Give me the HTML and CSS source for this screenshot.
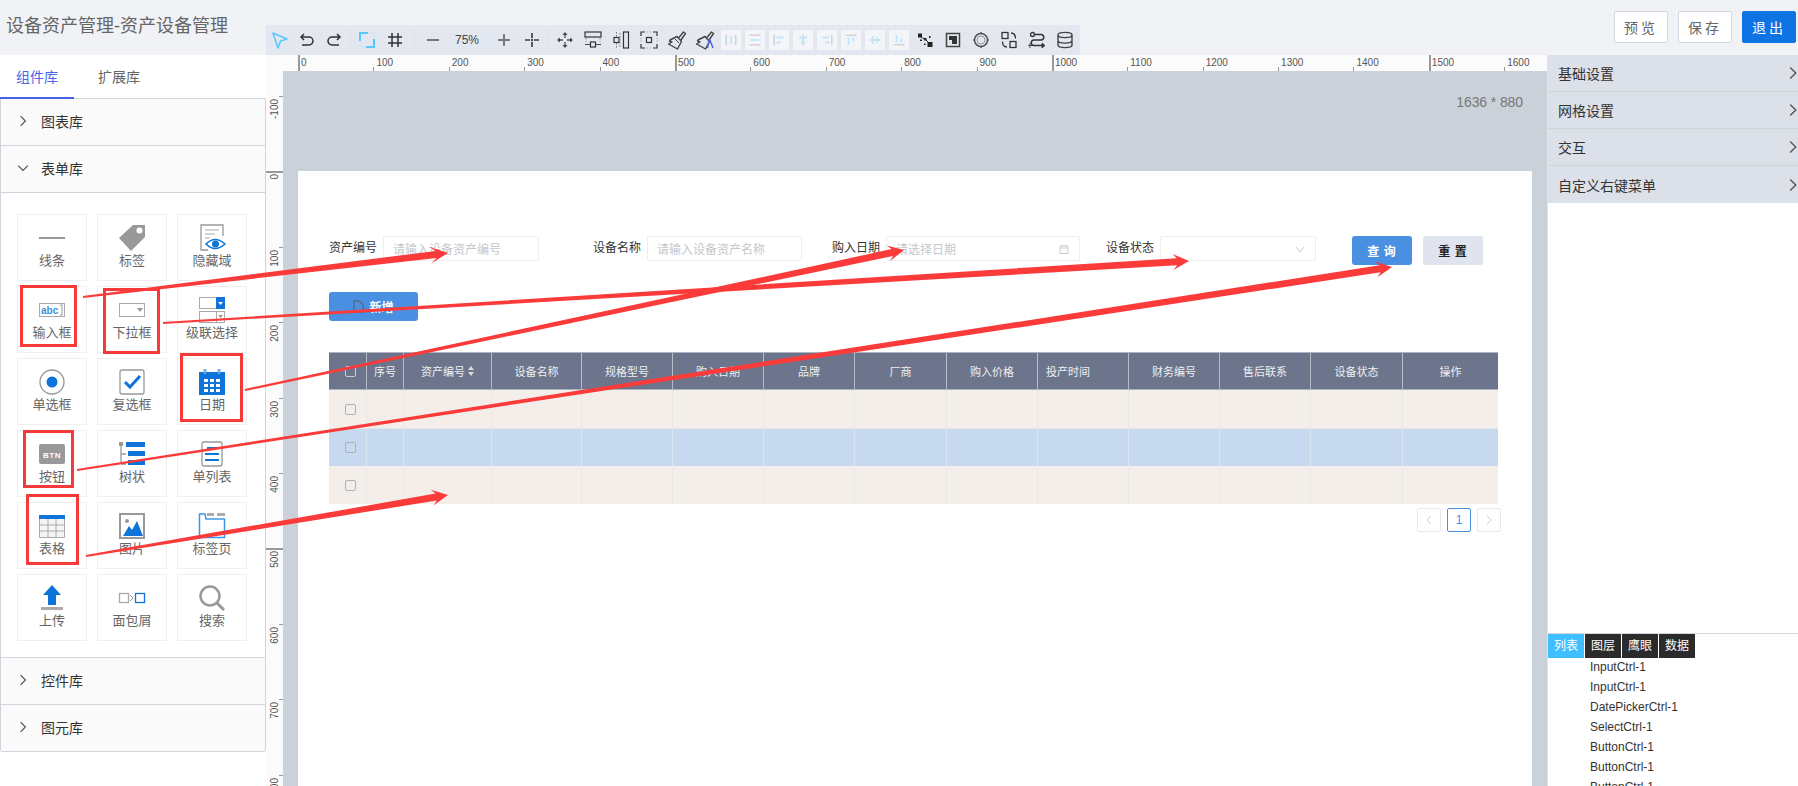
FILE: index.html
```html
<!DOCTYPE html>
<html lang="zh-CN">
<head>
<meta charset="utf-8">
<title>设备资产管理-资产设备管理</title>
<link rel="stylesheet" href="styles.css">
</head>
<body>
<div class="app">
  <header class="topbar">
    <h1 class="title">设备资产管理-资产设备管理</h1>
    <div class="toolbar">
      <span class="tool"><svg viewBox="0 0 20 20"><path d="M3 3 17 9 10.500 11 8 18Z" fill="none" stroke="#5ac8fa" stroke-width="1.600" stroke-linejoin="round"/></svg></span>
      <span class="tool tight"><svg viewBox="0 0 20 20"><path d="M7 4 4 7 7 10M4 7H12A3.500 3.500 0 0 1 12 15H5" fill="none" stroke="#333" stroke-width="1.500"/></svg></span>
      <span class="tool"><svg viewBox="0 0 20 20"><path d="M13 4 16 7 13 10M16 7H8A3.500 3.500 0 0 0 8 15H15" fill="none" stroke="#333" stroke-width="1.500"/></svg></span>
      <span class="sep gap5"></span>
      <span class="tool"><svg viewBox="0 0 20 20"><path d="M3 11V3H11M17 9V17H9" fill="none" stroke="#5ac8fa" stroke-width="2"/><path d="M3 11V17H9M11 3H17V9" fill="none" stroke="#cfe3f0" stroke-width="1"/></svg></span>
      <span class="tool"><svg viewBox="0 0 20 20"><path d="M7 3V17M13 3V17M3 7H17M3 13H17" fill="none" stroke="#333" stroke-width="1.500"/></svg></span>
      <span class="sep gap10"></span>
      <span class="tool"><svg viewBox="0 0 20 20"><path d="M4 10H16" stroke="#777" stroke-width="2"/></svg></span>
      <span class="zoom-value">75%</span>
      <span class="tool gap3"><svg viewBox="0 0 20 20"><path d="M4 10H16M10 4V16" stroke="#777" stroke-width="2"/></svg></span>
      <span class="tool"><svg viewBox="0 0 20 20"><path d="M10 3V8M10 12V17M3 10H8M12 10H17" stroke="#444" stroke-width="1.700"/><circle cx="10" cy="10" r="1.200" fill="#444"/></svg></span>
      <span class="sep gap5"></span>
      <span class="tool"><svg viewBox="0 0 20 20"><path d="M10 5V8M10 12V15M5 10H8M12 10H15" stroke="#555" stroke-width="1.300"/><path d="M10 2 12.500 5H7.500ZM10 18 7.500 15H12.500ZM2 10 5 7.500V12.500ZM18 10 15 12.500V7.500Z" fill="#444"/></svg></span>
      <span class="tool"><svg viewBox="0 0 20 20"><rect x="2" y="2" width="16" height="5" fill="none" stroke="#333" stroke-width="1.200"/><path d="M3 8V12M17 8V12" stroke="#888" stroke-dasharray="1.500 1.500"/><rect x="7.500" y="12" width="5" height="5" fill="none" stroke="#333" stroke-width="1.200"/><path d="M2 14.500H7M13 14.500H18" stroke="#444"/></svg></span>
      <span class="tool"><svg viewBox="0 0 20 20"><rect x="12.500" y="2" width="5" height="16" fill="none" stroke="#333" stroke-width="1.200"/><rect x="3" y="7.500" width="5" height="5" fill="none" stroke="#333" stroke-width="1.200"/><path d="M5.500 2V7M5.500 13V18M9 3V17" stroke="#777" stroke-dasharray="1.500 1.500"/></svg></span>
      <span class="tool"><svg viewBox="0 0 20 20"><path d="M2 6V2H6M14 2H18V6M18 14V18H14M6 18H2V14" fill="none" stroke="#333" stroke-width="1.200"/><path d="M8 2H12M8 18H12M2 8V12M18 8V12" stroke="#999" stroke-dasharray="1 1.500"/><rect x="7.500" y="7.500" width="5" height="5" fill="none" stroke="#333" stroke-width="1.200"/></svg></span>
      <span class="tool"><svg viewBox="0 0 20 20"><path d="M11.500 8 16.500 2 18.500 3.500 14 10M3 10 10 6.500 14.500 11.500 10.500 19 1.500 14 5 12 2.500 11Z" fill="none" stroke="#444" stroke-width="1.400" stroke-linejoin="round"/><path d="M8 9 12 13" stroke="#444"/></svg></span>
      <span class="tool"><svg viewBox="0 0 20 20"><path d="M11.500 8 16.500 2 18.500 3.500 14 10M3 10 10 6.500 14.500 11.500 10.500 19 1.500 14 5 12 2.500 11Z" fill="none" stroke="#444" stroke-width="1.400" stroke-linejoin="round"/><path d="M14.500 9 12.500 18M14.500 9 18 18" fill="none" stroke="#4a66d8" stroke-width="1.400"/></svg></span>
      <span class="tool off first-off"><svg viewBox="0 0 20 20"><path d="M4 3V17M16 3V17" stroke="#ccc" stroke-width="1.500"/><path d="M10 5V15" stroke="#bfe8fb" stroke-width="2.500"/></svg></span>
      <span class="tool off"><svg viewBox="0 0 20 20"><path d="M3 4H17M3 16H17" stroke="#ccc" stroke-width="1.500"/><path d="M5 10H15" stroke="#bfe8fb" stroke-width="2.500"/></svg></span>
      <span class="tool off"><svg viewBox="0 0 20 20"><path d="M4 3V17" stroke="#ccc" stroke-width="1.500"/><path d="M7 7H16M7 13H12" stroke="#bfe8fb" stroke-width="2.500"/></svg></span>
      <span class="tool off"><svg viewBox="0 0 20 20"><path d="M10 3V17" stroke="#ccc" stroke-width="1.500"/><path d="M5 7H15M7 13H13" stroke="#bfe8fb" stroke-width="2.500"/></svg></span>
      <span class="tool off"><svg viewBox="0 0 20 20"><path d="M16 3V17" stroke="#ccc" stroke-width="1.500"/><path d="M4 7H13M8 13H13" stroke="#bfe8fb" stroke-width="2.500"/></svg></span>
      <span class="tool off"><svg viewBox="0 0 20 20"><path d="M3 4H17" stroke="#ccc" stroke-width="1.500"/><path d="M7 7V16M13 7V12" stroke="#bfe8fb" stroke-width="2.500"/></svg></span>
      <span class="tool off"><svg viewBox="0 0 20 20"><path d="M3 10H17" stroke="#ccc" stroke-width="1.500"/><path d="M7 5V15M13 7V13" stroke="#bfe8fb" stroke-width="2.500"/></svg></span>
      <span class="tool off"><svg viewBox="0 0 20 20"><path d="M3 16H17" stroke="#ccc" stroke-width="1.500"/><path d="M7 4V13M13 8V13" stroke="#bfe8fb" stroke-width="2.500"/></svg></span>
      <span class="tool first-on"><svg viewBox="0 0 20 20"><path d="M3 3.500H7V7.500H3ZM12.500 12H17.500V17H12.500ZM9 8H11.500V10.500H9ZM5 9.500H7V11H5ZM14 6H15.500V8H14ZM9 13.500H10.500V15H9Z" fill="#222"/><path d="M5 6 9 9M11 10 14 13" stroke="#222"/></svg></span>
      <span class="tool"><svg viewBox="0 0 20 20"><rect x="3.500" y="3.500" width="13" height="13" fill="none" stroke="#444" stroke-width="1.500"/><path d="M6 6H14V14H9V10H6Z" fill="#333"/></svg></span>
      <span class="tool"><svg viewBox="0 0 20 20"><circle cx="10" cy="10" r="6.500" fill="none" stroke="#555" stroke-width="1.500"/><circle cx="10" cy="10" r="4" fill="none" stroke="#999"/><path d="M10 2V4M10 16V18M2 10H4M16 10H18" stroke="#444" stroke-width="1.200"/></svg></span>
      <span class="tool"><svg viewBox="0 0 20 20"><rect x="3" y="2.500" width="6" height="6" fill="none" stroke="#333" stroke-width="1.300"/><rect x="11" y="11.500" width="6" height="6" fill="none" stroke="#333" stroke-width="1.300"/><path d="M12 3C15 3 16.500 5 16.500 8.500M8 17C5 17 3.500 15 3.500 11.500" fill="none" stroke="#333" stroke-width="1.300"/></svg></span>
      <span class="tool"><svg viewBox="0 0 20 20"><circle cx="5.500" cy="4.500" r="2" fill="none" stroke="#333" stroke-width="1.300"/><path d="M8 4.500H14.500A2.800 2.800 0 0 1 14.500 10H6.500A2.800 2.800 0 0 0 6.500 15.500H15" fill="none" stroke="#333" stroke-width="1.500"/><path d="M15 13 18 15.500 15 18ZM3 13V18M1 15.500H6" fill="#333" stroke="#333" stroke-width=".8"/></svg></span>
      <span class="tool"><svg viewBox="0 0 20 20"><path d="M3 5C3 1.500 17 1.500 17 5V15C17 18.500 3 18.500 3 15ZM3 5C3 8.500 17 8.500 17 5M3 10.500C3 14 17 14 17 10.500" fill="none" stroke="#444" stroke-width="1.400"/></svg></span>
    </div>
    <div class="actions">
      <button class="act">预览</button>
      <button class="act">保存</button>
      <button class="act act-primary">退出</button>
    </div>
  </header>

  <div class="workspace">
    <aside class="lib">
      <nav class="lib-tabs">
        <span class="lib-tab lib-tab-on">组件库</span>
        <span class="lib-tab">扩展库</span>
      </nav>
      <div class="acc">
        <div class="acc-row"><svg class="chev" viewBox="0 0 10 10"><path d="M3 1 7 5 3 9"/></svg>图表库</div>
        <div class="acc-row"><svg class="chev" viewBox="0 0 10 10"><path d="M1 3 5 7 9 3"/></svg>表单库</div>
        <div class="acc-body">
          <div class="cards">
            <div class="card"><svg viewBox="0 0 30 30"><rect x="2" y="14" width="26" height="2" fill="#999"/></svg>线条</div>
            <div class="card"><svg viewBox="0 0 30 30"><path d="M2 15 16 2H28V14L14 28Z" fill="#999"/><circle cx="22.500" cy="7.500" r="3" fill="#fff"/></svg>标签</div>
            <div class="card"><svg viewBox="0 0 30 30"><path d="M11 27H4V2H26V13" fill="none" stroke="#999" stroke-width="1.300"/><path d="M8 7H22M8 11H18M8 15H13" stroke="#aaa" stroke-width="1.200"/><path d="M9 21Q18 12 28 21 18 30 9 21Z" fill="#fff" stroke="#0f74d9" stroke-width="1.500"/><circle cx="18.500" cy="21" r="3.500" fill="#0f74d9"/></svg>隐藏域</div>
            <div class="card"><svg viewBox="0 0 30 30"><rect x="2.500" y="8.500" width="25" height="13" fill="#fff" stroke="#aaa"/><text x="4" y="19" class="abc">abc</text><path d="M23 10H25V20H23" fill="none" stroke="#999"/></svg>输入框</div>
            <div class="card"><svg viewBox="0 0 30 30"><rect x="2.500" y="8.500" width="25" height="13" fill="#fff" stroke="#aaa"/><path d="M20 13H26L23 17Z" fill="#999"/></svg>下拉框</div>
            <div class="card"><svg viewBox="0 0 30 30"><rect x="2.500" y="2.500" width="25" height="11" fill="#fff" stroke="#aaa"/><rect x="19" y="2" width="9" height="12" fill="#0f74d9"/><path d="M21 7H26L23.500 10Z" fill="#fff"/><rect x="2.500" y="16.500" width="25" height="11" fill="#fff" stroke="#aaa"/><path d="M19.500 17V27" stroke="#aaa"/><path d="M21 20H26L23.500 23Z" fill="#999"/></svg>级联选择</div>
            <div class="card"><svg viewBox="0 0 30 30"><circle cx="15" cy="15" r="12" fill="none" stroke="#999" stroke-width="1.300"/><circle cx="15" cy="15" r="5.500" fill="#0f74d9"/></svg>单选框</div>
            <div class="card"><svg viewBox="0 0 30 30"><rect x="3" y="3" width="24" height="24" rx="2" fill="none" stroke="#999" stroke-width="1.300"/><path d="M8 15 13 20 23 9" fill="none" stroke="#0f74d9" stroke-width="3"/></svg>复选框</div>
            <div class="card"><svg viewBox="0 0 30 30"><path d="M2 5H28V28H2Z" fill="#0f74d9"/><path d="M8 2V8M22 2V8" stroke="#0f74d9" stroke-width="2.500"/><path d="M8 1V7M22 1V7" stroke="#fff" stroke-width=".8"/><path d="M7 12H11V15H7ZM13 12H17V15H13ZM19 12H23V15H19ZM7 17H11V20H7ZM13 17H17V20H13ZM19 17H23V20H19ZM7 22H11V25H7ZM13 22H17V25H13ZM19 22H23V25H19Z" fill="#fff"/></svg>日期</div>
            <div class="card"><svg viewBox="0 0 30 30"><rect x="2" y="5" width="26" height="20" rx="2" fill="#999"/><text x="15" y="18.500" class="btn-glyph">BTN</text></svg>按钮</div>
            <div class="card"><svg viewBox="0 0 30 30"><rect x="2" y="3" width="4" height="4" fill="#999"/><path d="M4 7V25M4 15H9M4 25H9" fill="none" stroke="#999" stroke-width="1.300"/><rect x="9" y="3" width="19" height="5" fill="#0f74d9"/><rect x="11" y="12" width="17" height="5" fill="#0f74d9"/><rect x="11" y="21" width="17" height="5" fill="#0f74d9"/></svg>树状</div>
            <div class="card"><svg viewBox="0 0 30 30"><rect x="5" y="3" width="20" height="24" rx="2" fill="none" stroke="#999" stroke-width="1.300"/><path d="M10 9H20M8 15H22M8 21H22" stroke="#0f74d9" stroke-width="2"/></svg>单列表</div>
            <div class="card"><svg viewBox="0 0 30 30"><rect x="2" y="4" width="26" height="4" fill="#0f74d9"/><path d="M2.500 8V26.500H27.500V8M2.500 14H27.500M2.500 20H27.500M11 8V26M19 8V26" fill="#f4f4f4" stroke="#aaa"/></svg>表格</div>
            <div class="card"><svg viewBox="0 0 30 30"><rect x="3" y="3" width="24" height="24" fill="none" stroke="#999" stroke-width="2"/><circle cx="10" cy="10" r="2" fill="#999"/><path d="M6 25 12 15 15 19 20 10 26 25Z" fill="#0f74d9"/></svg>图片</div>
            <div class="card"><svg viewBox="0 0 30 30"><path d="M2.500 3V26.500H27.500V8H9L8 3Z" fill="none" stroke="#3c96e6" stroke-width="1.500"/><path d="M10 3.500H17M20 3.500H28" stroke="#aaa" stroke-width="3"/></svg>标签页</div>
            <div class="card"><svg viewBox="0 0 30 30"><path d="M15 2 24 12H19V22H11V12H6Z" fill="#0f74d9"/><rect x="4" y="24" width="22" height="3" fill="#aaa"/></svg>上传</div>
            <div class="card"><svg viewBox="0 0 30 30"><rect x="2.500" y="10.500" width="9" height="9" fill="none" stroke="#aaa" stroke-width="1.300"/><path d="M13 12 16 15 13 18" fill="none" stroke="#999"/><rect x="18.500" y="10.500" width="9" height="9" fill="none" stroke="#0f74d9" stroke-width="1.300"/></svg>面包屑</div>
            <div class="card"><svg viewBox="0 0 30 30"><circle cx="13" cy="13" r="9.500" fill="none" stroke="#999" stroke-width="2.500"/><path d="M20 20 27 27" stroke="#999" stroke-width="3"/></svg>搜索</div>
          </div>
        </div>
        <div class="acc-row"><svg class="chev" viewBox="0 0 10 10"><path d="M3 1 7 5 3 9"/></svg>控件库</div>
        <div class="acc-row"><svg class="chev" viewBox="0 0 10 10"><path d="M3 1 7 5 3 9"/></svg>图元库</div>
      </div>
    </aside>

    <main class="stage">
      <div class="ruler-h">
        <span class="rh major">0</span><span class="rh">100</span><span class="rh">200</span><span class="rh">300</span><span class="rh">400</span><span class="rh major">500</span><span class="rh">600</span><span class="rh">700</span><span class="rh">800</span><span class="rh">900</span><span class="rh major">1000</span><span class="rh">1100</span><span class="rh">1200</span><span class="rh">1300</span><span class="rh">1400</span><span class="rh major">1500</span><span class="rh">1600</span>
      </div>
      <div class="stage-body">
        <div class="ruler-v">
          <span class="rv"><b>-100</b></span><span class="rv major"><b>0</b></span><span class="rv"><b>100</b></span><span class="rv"><b>200</b></span><span class="rv"><b>300</b></span><span class="rv"><b>400</b></span><span class="rv major"><b>500</b></span><span class="rv"><b>600</b></span><span class="rv"><b>700</b></span><span class="rv"><b>800</b></span>
        </div>
        <div class="canvas">
          <div class="canvas-size">1636 * 880</div>
          <section class="page">
            <div class="form">
              <label class="lbl">资产编号</label>
              <div class="inp w156">请输入设备资产编号</div>
              <label class="lbl g54">设备名称</label>
              <div class="inp w155">请输入设备资产名称</div>
              <label class="lbl g30">购入日期</label>
              <div class="inp w194">请选择日期<svg class="inp-ico" viewBox="0 0 12 12"><path d="M2 3H10V10.500H2ZM2 5H10M4 1.500V3M8 1.500V3" fill="none" stroke="#ccc"/></svg></div>
              <label class="lbl g26">设备状态</label>
              <div class="inp w156"><svg class="inp-ico" viewBox="0 0 12 12"><path d="M2 4 6 9 10 4" fill="none" stroke="#ccc"/></svg></div>
              <button class="pbtn pbtn-blue g36">查 询</button>
              <button class="pbtn pbtn-grey">重 置</button>
            </div>
            <button class="add"><svg viewBox="0 0 12 14"><path d="M1 1H7L11 5V13H1Z" fill="none" stroke="#5a6a80" stroke-width="1.500"/></svg>新增</button>
            <div class="table">
              <div class="tr th">
                <span class="td td-chk"><i class="chk chk-head"></i></span>
                <span class="td">序号</span>
                <span class="td">资产编号<svg class="sort" viewBox="0 0 6 12"><path d="M3 1 6 5H0ZM3 11 0 7H6Z" fill="#ddd"/></svg></span>
                <span class="td">设备名称</span>
                <span class="td">规格型号</span>
                <span class="td">购入日期</span>
                <span class="td">品牌</span>
                <span class="td">厂商</span>
                <span class="td">购入价格</span>
                <span class="td td-left">投产时间</span>
                <span class="td">财务编号</span>
                <span class="td">售后联系</span>
                <span class="td">设备状态</span>
                <span class="td">操作</span>
              </div>
              <div class="tr tb"><span class="td td-chk"><i class="chk"></i></span><span class="td"></span><span class="td"></span><span class="td"></span><span class="td"></span><span class="td"></span><span class="td"></span><span class="td"></span><span class="td"></span><span class="td"></span><span class="td"></span><span class="td"></span><span class="td"></span><span class="td"></span></div>
              <div class="tr tb tb-on"><span class="td td-chk"><i class="chk"></i></span><span class="td"></span><span class="td"></span><span class="td"></span><span class="td"></span><span class="td"></span><span class="td"></span><span class="td"></span><span class="td"></span><span class="td"></span><span class="td"></span><span class="td"></span><span class="td"></span><span class="td"></span></div>
              <div class="tr tb"><span class="td td-chk"><i class="chk"></i></span><span class="td"></span><span class="td"></span><span class="td"></span><span class="td"></span><span class="td"></span><span class="td"></span><span class="td"></span><span class="td"></span><span class="td"></span><span class="td"></span><span class="td"></span><span class="td"></span><span class="td"></span></div>
            </div>
            <div class="pager">
              <span class="pg"><svg viewBox="0 0 10 10"><path d="M7 1 3 5 7 9" fill="none" stroke="#ccc"/></svg></span>
              <span class="pg pg-on">1</span>
              <span class="pg"><svg viewBox="0 0 10 10"><path d="M3 1 7 5 3 9" fill="none" stroke="#ccc"/></svg></span>
            </div>
          </section>
        </div>
      </div>
    </main>

    <aside class="props">
      <div class="prop"><span>基础设置</span><svg class="chev" viewBox="0 0 10 10"><path d="M3 1 7 5 3 9"/></svg></div>
      <div class="prop"><span>网格设置</span><svg class="chev" viewBox="0 0 10 10"><path d="M3 1 7 5 3 9"/></svg></div>
      <div class="prop"><span>交互</span><svg class="chev" viewBox="0 0 10 10"><path d="M3 1 7 5 3 9"/></svg></div>
      <div class="prop prop-last"><span>自定义右键菜单</span><svg class="chev" viewBox="0 0 10 10"><path d="M3 1 7 5 3 9"/></svg></div>
      <div class="props-fill"></div>
      <div class="outline">
        <div class="out-tabs">
          <span class="out-tab out-tab-on">列表</span>
          <span class="out-tab">图层</span>
          <span class="out-tab">鹰眼</span>
          <span class="out-tab">数据</span>
        </div>
        <ul class="out-list">
          <li>InputCtrl-1</li>
          <li>InputCtrl-1</li>
          <li>DatePickerCtrl-1</li>
          <li>SelectCtrl-1</li>
          <li>ButtonCtrl-1</li>
          <li>ButtonCtrl-1</li>
          <li>ButtonCtrl-1</li>
        </ul>
      </div>
    </aside>
  </div>

  <svg class="marks" viewBox="0 0 1798 786">
    <g class="mark-box">
      <rect x="21.500" y="286.500" width="54" height="59"/>
      <rect x="104.500" y="289.500" width="54" height="63"/>
      <rect x="181.500" y="354.500" width="60" height="66"/>
      <rect x="24.500" y="431.500" width="48" height="55"/>
      <rect x="27.500" y="495.500" width="50" height="68"/>
    </g>
    <g class="mark-arrow">
      <polygon points="83.100,298 436.600,257.900 431.100,263.600 448,253 429.100,246.800 435.600,250.900 82.900,296"/>
      <polygon points="163.100,324 1177.200,265.200 1173.500,270 1189,261 1172.500,254 1176.800,258.200 162.900,322"/>
      <polygon points="245.200,391 893,255.900 890,261.100 904,250 886.600,245.500 891.600,249.100 244.800,389"/>
      <polygon points="77.200,471 1380.600,272.300 1377.400,277.300 1392,267 1375,261.500 1379.600,265.300 76.800,469"/>
      <polygon points="86.200,557 436.800,500.500 433.500,505.600 448,495 430.900,489.800 435.600,493.600 85.800,555"/>
    </g>
  </svg>
</div>
</body>
</html>
```

FILE: styles.css
```css
* { box-sizing: border-box; }
html, body { margin: 0; padding: 0; height: 100%; overflow: hidden; }
body {
  font-family: "Liberation Sans", "Noto Sans CJK SC", sans-serif;
  font-size: 12px;
  color: #333;
  background: #fff;
}
.app { position: relative; width: 1798px; height: 786px; overflow: hidden; display: flex; flex-direction: column; }

/* top bar */
.topbar { flex: 0 0 55px; display: flex; background: #f0f2f6; }
.title { flex: 0 0 266px; margin: 0; padding: 16px 0 0 6px; font-size: 18px; line-height: 20px; font-weight: 400; color: #666; white-space: nowrap; }
.toolbar { flex: 0 0 814px; height: 30px; margin-top: 25px; display: flex; align-items: center; background: #e3e7f0; }
.tool { flex: 0 0 28px; height: 30px; display: flex; align-items: center; justify-content: center; }
.tool svg { width: 20px; height: 20px; display: block; }
.tool.tight { flex-basis: 26px; }
.sep { flex: 0 0 1px; height: 20px; background: #dde1ea; }
.sep.gap5 { margin: 0 2px 0 2px; }
.sep.gap10 { margin: 0 4px 0 5px; }
.zoom-value { flex: 0 0 40px; text-align: center; font-size: 12px; color: #444; }
.tool.gap3 { margin-left: 3px; }
.tool.off { flex-basis: 20px; height: 20px; margin-right: 4px; background: #f3f5f9; }
.tool.off svg { width: 16px; height: 16px; }
.tool.first-off { margin-left: 2px; }
.tool.first-on { margin-left: -2px; }
.actions { flex: 1; display: flex; justify-content: flex-end; gap: 10px; padding: 11px 2px 0 0; }
.act { width: 54px; height: 32px; padding: 0; border: 1px solid #d3d7e0; border-radius: 2px; background: #fff; color: #666; font: 14px "Noto Sans CJK SC", sans-serif; letter-spacing: 3px; }
.act-primary { background: #0f74e3; border-color: #0f74e3; color: #fff; }

/* main */
.workspace { flex: 1; min-height: 0; display: flex; }

/* library */
.lib { flex: 0 0 266px; background: #fff; }
.lib-tabs { height: 44px; display: flex; gap: 0; }
.lib-tab { flex: 0 0 74px; height: 44px; padding: 12px 0 0 24px; font-size: 14px; line-height: 20px; color: #666; white-space: nowrap; }
.lib-tab-on { padding-left: 16px; color: #4b64e6; border-bottom: 2px solid #4563e0; }
.acc { width: 266px; border: 1px solid #d0d4de; border-top: 1px solid #d0d4de; margin-top: -1px; border-radius: 0 0 2px 2px; }
.acc-row { height: 47px; display: flex; align-items: center; padding: 0 0 2px 16px; border-bottom: 1px solid #d0d4de; background: #fafafa; font-size: 14px; color: #333; }
.acc-row:last-child { border-bottom: 0; height: 46px; }
.chev { width: 12px; height: 12px; fill: none; stroke: #555; stroke-width: 1; }
.acc-row .chev { margin-right: 12px; }
.acc-body { padding: 21px 0 16px 16px; border-bottom: 1px solid #d0d4de; }
.cards { display: grid; grid-template-columns: repeat(3, 70px); grid-auto-rows: 67px; column-gap: 10px; row-gap: 5px; }
.card { padding-top: 8px; border: 1px solid #eee; text-align: center; font-size: 13px; line-height: 16px; color: #666; }
.card svg { width: 30px; height: 30px; display: block; margin: 0 auto; }
.abc { font: bold 10px "Liberation Sans", sans-serif; fill: #3a8fe0; }
.btn-glyph { font: bold 8px "Liberation Sans", sans-serif; fill: #fff; text-anchor: middle; letter-spacing: .5px; }

/* stage */
.stage { flex: 1; min-width: 0; display: flex; flex-direction: column; }
.ruler-h { flex: 0 0 16px; display: flex; padding-left: 32px; background: #fbfbfb; overflow: hidden; }
.rh { flex: 0 0 75.4px; padding-left: 3px; font-size: 10px; line-height: 15px; color: #555; background: linear-gradient(#999, #999) left bottom / 1px 4px no-repeat; }
.rh.major { background-size: 2px 16px; }
.stage-body { flex: 1; min-height: 0; display: flex; }
.ruler-v { flex: 0 0 17px; padding-top: 25px; display: flex; flex-direction: column; background: #fbfbfb; overflow: hidden; }
.rv { flex: 0 0 75.4px; padding: 3px 0 0 3px; background: linear-gradient(#999, #999) right top / 4px 1px no-repeat; }
.rv.major { background-size: 17px 2px; }
.rv b { display: block; width: 12px; font-weight: 400; font-size: 10px; line-height: 12px; color: #555; writing-mode: vertical-rl; transform: rotate(180deg); }
.canvas { flex: 1; min-width: 0; padding: 0 15px; background: #cad1d9; overflow: hidden; }
.canvas-size { height: 100px; padding: 21px 9px 0 0; text-align: right; font-size: 14px; line-height: 20px; color: #777; letter-spacing: -.1px; }
.page { width: 1234px; height: 700px; padding: 65px 0 0 31px; background: #fff; }

.form { display: flex; align-items: flex-start; height: 30px; }
.lbl { width: 48px; margin-right: 6px; font-size: 12px; line-height: 24px; color: #333; white-space: nowrap; }
.g54 { margin-left: 54px; }
.g30 { margin-left: 30px; }
.g26 { margin-left: 26px; }
.inp { height: 25px; display: flex; align-items: center; justify-content: space-between; padding: 0 9px; border: 1px solid #eee; border-radius: 2px; font-size: 12px; color: #c4c7cc; white-space: nowrap; }
.w156 { width: 156px; justify-content: flex-start; }
.w155 { width: 155px; justify-content: flex-start; }
.w156 .inp-ico { margin-left: auto; }
.w194 { width: 194px; }
.inp-ico { width: 12px; height: 12px; }
.pbtn { width: 60px; height: 29px; padding: 0; border: 0; border-radius: 3px; font: bold 12px "Noto Sans CJK SC", sans-serif; letter-spacing: 1px; }
.pbtn-blue { background: #4a90e2; color: #fff; }
.pbtn-grey { margin-left: 11px; background: #dfe4ee; color: #222; }
.g36 { margin-left: 36px; }
.add { width: 89px; height: 29px; margin-top: 26px; display: flex; align-items: center; justify-content: center; gap: 5px; padding: 0; border: 0; border-radius: 3px; background: #4a90e2; color: #fff; font: bold 12px "Noto Sans CJK SC", sans-serif; }
.add svg { width: 11px; height: 13px; }

.table { width: 1169px; margin-top: 31px; }
.tr { display: grid; grid-template-columns: 38px 37px 88px 90px 91px 91px 91px 92px 91px 91px 91px 91px 92px 95px; height: 38px; }
.td { display: flex; align-items: center; justify-content: center; font-size: 11px; white-space: nowrap; }
.td-chk { padding-left: 5px; }
.th { background: #6c758b; border-top: 1px solid #aeb3bf; border-bottom: 1px solid #aeb3bf; color: #eef0f3; }
.th .td { border-right: 1px solid #b9bdc8; }
.th .td:last-child { border-right: 0; }
.td-left { justify-content: flex-start; padding-left: 8px; }
.sort { width: 6px; height: 12px; margin-left: 3px; }
.tb { background: #f3eeea; }
.tb .td { border-right: 1px solid #ebe8e4; }
.tb .td:last-child { border-right: 0; }
.tb-on { background: #c7d9ee; border-top: 1px solid #e2e6ea; }
.tb-on .td { border-right-color: #dbe5f0; }
.chk { display: block; width: 11px; height: 11px; border: 1px solid #b3b0ad; border-radius: 2px; background: transparent; }
.chk-head { border-color: #c9ccd4; }

.pager { width: 1172px; margin-top: 4px; display: flex; justify-content: flex-end; gap: 6px; }
.pg { width: 24px; height: 24px; display: flex; align-items: center; justify-content: center; border: 1px solid #e6e8ec; border-radius: 2px; font-size: 12px; color: #4a90e2; }
.pg svg { width: 10px; height: 10px; }
.pg-on { border-color: #4a90e2; }

/* properties */
.props { flex: 0 0 251px; display: flex; flex-direction: column; background: #fff; border-left: 1px solid #dfe2e7; }
.prop { flex: 0 0 37px; display: flex; align-items: center; justify-content: space-between; padding: 0 0 0 10px; border-bottom: 1px solid #cfd3da; background: #dce0e8; font-size: 14px; color: #333; }
.prop-last { border-bottom: 0; }
.prop .chev { width: 14px; height: 14px; margin-right: -2px; }
.props-fill { flex: 1; }
.outline { flex: 0 0 153px; overflow: hidden; border-top: 1px solid #d3d6dc; }
.out-tabs { display: flex; gap: 1px; height: 24px; }
.out-tab { flex: 0 0 36px; background: #2b2b2b; color: #fff; font-size: 12px; line-height: 24px; text-align: center; }
.out-tab-on { background: #3fbfff; }
.out-list { margin: -1px 0 0; padding: 0 0 0 42px; list-style: none; }
.out-list li { height: 20px; font-size: 12px; line-height: 20px; color: #333; }

/* red annotations drawn on top of the screenshot */
.marks { position: absolute; left: 0; top: 0; width: 1798px; height: 786px; pointer-events: none; }
.mark-box rect { fill: none; stroke: #f63a3a; stroke-width: 3; }
.mark-arrow polygon { fill: #fb3a3a; }
```
